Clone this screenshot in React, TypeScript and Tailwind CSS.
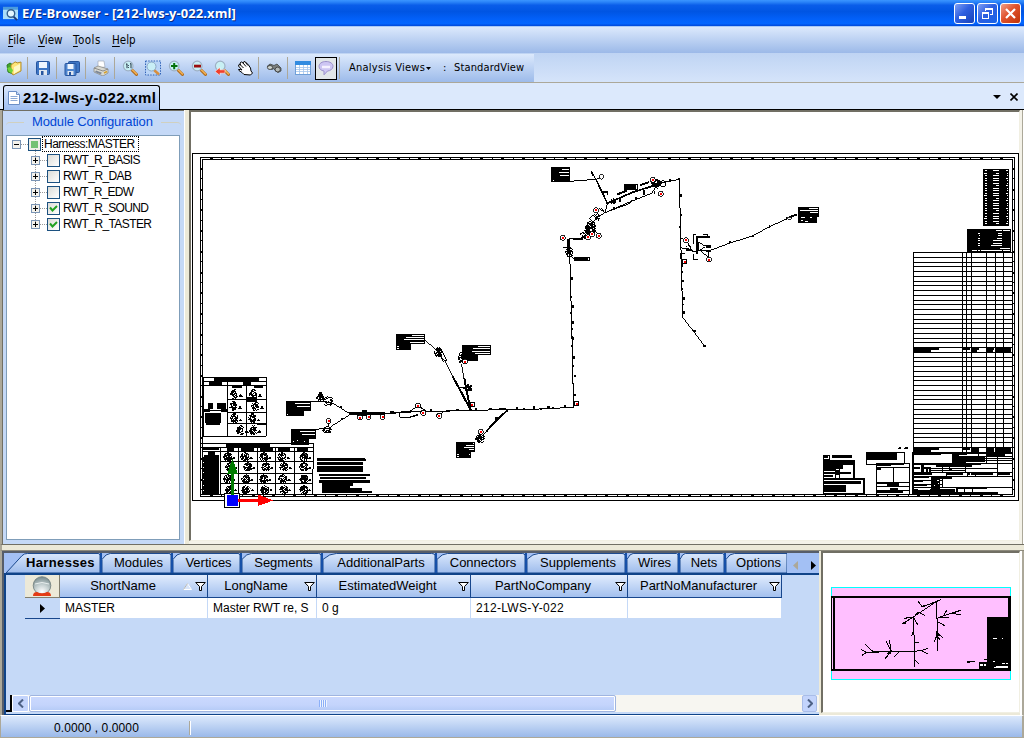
import React from "react";

const ui = "font-['DejaVu_Sans_Condensed','DejaVu_Sans',sans-serif]";

type Box = [number, number, number, number];

function Boxes({ items, fill = "#000" }: { items: Box[]; fill?: string }) {
  return (
    <g fill={fill}>
      {items.map(([x1, y1, x2, y2], i) => (
        <rect key={i} x={x1} y={y1} width={x2 - x1} height={y2 - y1} />
      ))}
    </g>
  );
}

function Lines({ d, w = 3, color = "#000" }: { d: string; w?: number; color?: string }) {
  return <path d={d} fill="none" stroke={color} strokeWidth={w} />;
}

/* dense symbol cluster drawn on a 3-unit raster */
function Cluster({ x, y, w, h, seed = 1, density = 0.6 }: { x: number; y: number; w: number; h: number; seed?: number; density?: number }) {
  let s = seed * 7919 + 13;
  let d = "";
  for (let r = 0; r < h; r += 3) {
    for (let c = 0; c < w; c += 3) {
      s = (s * 1103515245 + 12345) % 2147483648;
      const u = (c - w / 2) / (w / 2);
      const v = (r - h / 2) / (h / 2);
      if (u * u + v * v < 1.1 && s / 2147483648 < density) d += `M${x + c} ${y + r}h3v3h-3z`;
    }
  }
  return <path d={d} fill="#000" />;
}

function Marker({ x, y, square = false }: { x: number; y: number; square?: boolean }) {
  return (
    <g>
      {square ? (
        <rect x={x - 5.5} y={y - 6} width="12" height="12" fill="#fff" stroke="#000" strokeWidth="3" />
      ) : (
        <circle cx={x} cy={y} r="7.5" fill="#fff" stroke="#000" strokeWidth="2.6" />
      )}
      <rect x={x - 3} y={y - 3} width="6" height="6" fill="#f00" />
    </g>
  );
}

function Ticks() {
  const out: React.ReactElement[] = [];
  for (let i = 0; i < 78; i++) {
    const x = 544.3 + (i - 32) * 10.4;
    const w = i % 2 === 0 ? 3 : 1;
    if (x > 203 && x < 1011) {
      out.push(<rect key={"t" + i} x={Math.round(x - w / 2)} y="157" width={w} height="2" />);
      out.push(<rect key={"b" + i} x={Math.round(x - w / 2)} y="494" width={w} height="2" />);
    }
  }
  for (let i = 0; i < 33; i++) {
    const y = 168 + i * 10.35;
    const h = i % 2 === 0 ? 2 : 1;
    if (y < 492) {
      out.push(<rect key={"l" + i} x="200" y={Math.round(y)} width="3" height={h} />);
      out.push(<rect key={"r" + i} x="1012" y={Math.round(y)} width="2" height={h} />);
    }
  }
  return <g>{out}</g>;
}

const rowYs = Array.from({ length: 42 }, (_, i) => Math.round(252 + i * 4.75));
const slitYs = [60, 70, 75, 85, 90, 99, 105, 115, 120, 130, 135, 145, 150, 160, 165, 175, 180, 190, 199, 204, 213, 219];
const legendCells = [
  [98, 246], [150, 246], [206, 246], [262, 246], [326, 246],
  [104, 276], [158, 276], [212, 276], [268, 276], [326, 276],
  [98, 312], [152, 312], [206, 312], [264, 312], [326, 312],
  [104, 343], [154, 343], [210, 343], [266, 343], [326, 343],
];

function Drawing() {
  return (
    <svg className="block h-full w-full" viewBox="191 112 828 428" preserveAspectRatio="none" shapeRendering="crispEdges">
      <rect x="192.5" y="153.5" width="826" height="347" fill="none" stroke="#000" />
      <rect x="200.5" y="157.5" width="814" height="339" fill="none" stroke="#000" />
      <rect x="202.5" y="159.5" width="810" height="335" fill="none" stroke="#000" />
      <Ticks />
      {/* parts table */}
      {rowYs.map((y) => (
        <rect key={y} x="913" y={y} width="100" height="1" />
      ))}
      {[913, 962, 966, 971, 986, 995, 1003].map((x) => (
        <rect key={x} x={x} y="252" width="1" height="202" />
      ))}

      {/* title blocks, upper right */}
      <g transform="translate(810 150) scale(.33333)">
        <Boxes items={[[519, 57, 597, 228], [471, 237, 603, 306], [310, 592, 387, 600], [310, 598, 363, 609], [458, 592, 480, 600], [485, 592, 507, 600], [485, 598, 501, 609], [530, 592, 552, 600], [530, 598, 549, 609], [557, 592, 603, 609]]} />
        {slitYs.map((y, i) => (
          <Boxes key={y} fill="#fff" items={[[i % 9 === 1 ? 522 : 525, y, 531, y + 3], [i % 5 === 1 ? 558 : 549, y, 567, y + 3], [i % 3 === 0 ? 588 : 591, y, 594, y + 3]]} />
        ))}
        <Boxes fill="#fff" items={[[558, 240, 576, 243], [579, 240, 600, 243], [504, 249, 510, 252], [507, 255, 510, 258], [504, 264, 510, 267], [504, 270, 510, 273], [504, 279, 510, 282], [504, 285, 510, 288], [564, 249, 576, 252], [564, 255, 576, 258], [561, 264, 576, 267], [549, 270, 576, 273], [549, 279, 576, 282], [543, 285, 576, 288], [570, 294, 600, 297], [486, 300, 501, 303], [504, 300, 510, 303], [513, 300, 576, 303], [579, 300, 600, 303]]} />
      </g>

      {/* title blocks, lower right */}
      <g transform="translate(810 340) scale(.33333)">
        <Boxes items={[[310, 322, 387, 330], [310, 328, 363, 337], [458, 322, 480, 330], [485, 322, 507, 336], [530, 322, 552, 336], [557, 322, 603, 337], [306, 336, 312, 462], [310, 336, 607, 342], [310, 342, 393, 345], [426, 342, 447, 376], [447, 342, 471, 345], [447, 351, 525, 365], [447, 365, 468, 376], [530, 342, 585, 347], [310, 369, 513, 375], [310, 381, 330, 387], [333, 375, 342, 396], [342, 381, 363, 384], [348, 387, 354, 396], [357, 387, 363, 396], [378, 375, 486, 380], [417, 387, 426, 391], [310, 399, 366, 405], [408, 399, 459, 405], [471, 399, 480, 405], [483, 399, 495, 405], [498, 399, 549, 405], [561, 399, 600, 405], [310, 408, 607, 411], [363, 411, 426, 417], [363, 417, 390, 462], [310, 411, 357, 414], [310, 423, 339, 426], [310, 435, 351, 438], [310, 447, 324, 462], [324, 450, 360, 459], [360, 447, 435, 459], [438, 444, 531, 447], [438, 447, 444, 459], [310, 457, 564, 464]]} />
        <Lines d="M447 348.500H607M525 354.500H607M525 361.500H607M468 370.500H607M310 397.500H607M333 385.500H562M363 391.500H465M310 420.500H397M310 432.500H397M310 441.500H607M505 343V363M529 343V370M562 343V408M397 375V397M418 378V391M466 380V397M397 411V441M463 447V459M487 447V459M409 397V408M472 397V408M498 397V408" />
        <Boxes fill="#fff" items={[[381, 420, 387, 423], [384, 429, 387, 432], [372, 435, 375, 438]]} />
        <Boxes items={[[264, 324, 267, 327], [267, 321, 273, 327], [282, 324, 285, 327], [285, 321, 294, 327], [39, 345, 58, 348], [39, 345, 54, 354], [39, 357, 60, 360], [66, 345, 126, 354], [39, 360, 135, 375], [39, 375, 99, 387], [39, 387, 78, 393], [39, 396, 123, 402], [39, 405, 69, 411], [129, 360, 135, 414], [76, 390, 90, 405], [39, 414, 165, 420], [42, 423, 153, 432], [42, 435, 108, 456], [159, 414, 165, 463], [39, 458, 165, 463], [168, 337, 261, 360], [199, 375, 243, 378], [199, 381, 213, 390], [199, 426, 231, 432], [231, 430, 267, 441], [240, 444, 264, 450], [199, 450, 279, 459]]} />
        <Lines d="M40.500 345V463M58.500 345V360M78 387V414M88 387V414M169.500 337.500H283.500V373.500H169.500ZM199.500 370.500H298.500V463H199.500ZM199 382.500H298M250.500 382V427M199 427.500H298M199 439.500H298M199 451.500H298" />
      </g>

      {/* legends, lower left */}
      <g transform="translate(190 370) scale(.33333)">
        <Boxes items={[[72, 22, 207, 34], [57, 37, 96, 44], [160, 37, 183, 44], [127, 47, 155, 54], [193, 47, 220, 54], [54, 100, 69, 116], [82, 100, 107, 116], [42, 116, 60, 126], [60, 119, 112, 123], [45, 128, 92, 158], [93, 116, 112, 126], [169, 82, 200, 96], [112, 86, 135, 90], [202, 160, 230, 166], [48, 158, 90, 164]]} />
        <Lines d="M40.500 22.500H229.500V199.500H40.500ZM40 35.500H230M40 46.500H230M112.500 35V199M169.500 46V199M112 88.500H230M112 127.500H230M112 160.500H230" />
        {[[120, 56], [178, 56], [118, 92], [184, 92], [120, 130], [174, 130], [138, 164], [176, 164]].map(([x, y], i) => (
          <g key={i}>
            <Cluster x={x} y={y} w={24} h={30} seed={i + 3} density={0.62} />
            <path d={`M${x + 26} ${y + 24}l6-9l6 9z`} />
            <circle cx={x + 12} cy={y + 16} r="7" fill="none" stroke="#000" strokeWidth="3" />
          </g>
        ))}
        <Boxes items={[[108, 220, 240, 233], [40, 234, 87, 240], [110, 235, 132, 243], [153, 235, 192, 243], [210, 235, 250, 243], [264, 235, 300, 243], [320, 235, 354, 243], [54, 246, 75, 258], [42, 256, 87, 262], [36, 262, 87, 373]]} />
        <Lines d="M34 220.500H370.500V297M368 297V373M40 233.500H370M40 243.500H370M91 274.500H369M91 310.500H369M91 340.500H369M91.500 233V373M145.500 233V373M202.500 233V373M256.500 233V373M313.500 233V373M34 373.500H370" />
        {legendCells.map(([x, y], i) => (
          <g key={i}>
            <Cluster x={x} y={y + 1} w={27} h={27} seed={i + 21} density={0.75} />
            <path d={`M${x + 27} ${y + 21}l6-8l6 8z`} />
            <path d={`M${x} ${y + 18}l8-6M${x + 18} ${y + 4}l9 9`} stroke="#000" strokeWidth="2" />
          </g>
        ))}
        <Boxes fill="#fff" items={[[39, 276, 42, 279], [39, 291, 42, 294], [39, 306, 42, 309], [39, 327, 42, 330], [39, 345, 42, 348], [39, 360, 42, 363]]} />
        <Boxes items={[[381, 264, 525, 272], [381, 267, 528, 273], [381, 276, 519, 285], [381, 288, 519, 306], [387, 312, 540, 318], [390, 321, 528, 327], [387, 330, 540, 339], [396, 336, 489, 348], [396, 348, 480, 354], [396, 354, 516, 363], [396, 360, 507, 369], [396, 363, 546, 369]]} />

        {/* left branch of the harness */}
        <Boxes items={[[288, 93, 363, 123], [288, 120, 342, 138], [303, 177, 378, 207], [303, 204, 357, 224]]} />
        <Boxes fill="#fff" items={[[315, 100, 360, 102], [321, 108, 360, 110], [303, 116, 360, 118], [330, 183, 375, 185], [336, 192, 375, 194], [318, 200, 375, 202], [291, 132, 294, 135], [309, 213, 312, 216], [321, 210, 324, 213], [342, 213, 345, 216]]} />
        <Lines w={3} d="M363 94H382L410 96L425 98L478 130M378 178L398 176L418 174L430 165L478 135M416 153V172M478 132H605L632 126H780M630 128V142H660L684 132M663 122L684 107L708 123M747 136L760 126" />
        <Boxes items={[[478, 127, 585, 134], [516, 120, 531, 129], [500, 134, 540, 138], [606, 123, 612, 128], [720, 118, 724, 124], [450, 109, 455, 115], [452, 144, 458, 150], [388, 67, 395, 84]]} />
        <Cluster x={378} y={70} w={24} h={27} seed={4} density={0.8} />
        <Cluster x={398} y={78} w={30} h={30} seed={8} density={0.5} />
        <Cluster x={396} y={168} w={30} h={20} seed={7} density={0.65} />
        <Marker x={416} y={153} /><Marker x={510} y={143} /><Marker x={536} y={141} /><Marker x={578} y={141} />
        <Marker x={684} y={107} /><Marker x={700} y={128} /><Marker x={747} y={137} />
      </g>

      {/* centre branches */}
      <g transform="translate(390 320) scale(.33333)">
        <Lines d="M0 279L28 277L240 271L350 269L450 267L552 262L548 162L545 0" />
        <Boxes items={[[546, 3, 552, 12], [546, 24, 549, 30], [543, 75, 546, 81], [549, 108, 555, 117], [549, 135, 552, 140], [552, 165, 558, 171], [546, 186, 550, 192], [552, 222, 558, 228], [522, 255, 528, 263], [486, 262, 492, 265], [471, 259, 480, 265], [429, 258, 435, 267], [378, 262, 384, 268], [399, 265, 405, 269], [327, 263, 347, 270], [297, 264, 306, 270], [255, 265, 261, 273], [198, 267, 207, 273], [120, 268, 126, 275], [450, 265, 456, 270], [0, 273, 12, 279], [18, 42, 105, 72], [18, 69, 63, 90], [216, 75, 303, 105], [216, 102, 264, 123], [198, 366, 255, 396], [198, 393, 243, 414]]} />
        <Boxes fill="#fff" items={[[66, 45, 102, 48], [48, 51, 102, 54], [42, 57, 102, 60], [60, 65, 102, 68], [21, 78, 27, 81], [21, 84, 27, 86], [264, 78, 300, 81], [249, 84, 300, 87], [246, 92, 300, 95], [255, 99, 300, 102], [228, 375, 252, 378], [222, 381, 252, 384], [237, 387, 252, 390], [201, 402, 207, 405], [201, 408, 207, 411], [237, 402, 240, 405], [249, 369, 252, 372]]} />
        <Lines w={2.7} d="M105 60L138 90L168 128L190 172L242 270M214 132L224 184L242 268" />
        <Lines w={6} d="M188 170L206 202L242 270M223 174L228 205L242 268M353 270L318 303L288 335" />
        <Lines d="M206 202H243M140 84L160 124L170 120L154 88ZM288 335L260 366" />
        <Cluster x={132} y={82} w={24} h={30} seed={13} density={0.8} />
        <Cluster x={203} y={96} w={15} h={33} seed={9} density={0.75} />
        <Cluster x={219} y={192} w={27} h={20} seed={5} density={0.8} />
        <Cluster x={256} y={342} w={30} h={25} seed={11} density={0.75} />
        <Boxes items={[[234, 204, 245, 212], [316, 291, 324, 303]]} />
        <Marker x={225} y={125} /><Marker x={247} y={254} square /><Marker x={560} y={251} square /><Marker x={273} y={336} />
        <Lines d="M30 279V292H54L84 286M60 274L84 257L106 272" />
        <Marker x={84} y={257} /><Marker x={100} y={279} /><Marker x={148} y={288} />
      </g>

      {/* upper branches */}
      <g transform="translate(530 150) scale(.33333)">
        <Lines d="M128 628L121 380L118 265H150L166 255L180 228L198 205L225 188L290 160L365 130L385 100M385 100L448 88L452 260L458 502L524 588M225 188L232 160L198 88L186 66M120 94L160 91L198 88L214 80M232 160L300 130L385 100M454 293L490 304L545 300L600 279L668 258L718 230L770 207L800 192" />
        <Lines w={5} d="M198 88L232 160L310 126L396 100M183 64L190 76" />
        <Lines w={6} d="M262 133L290 122M331 105L358 96M114 268V312M130 267H160M768 206L802 193" />
        <Lines d="M208 175L224 188M212 173L222 184M178 205L190 218M178 205L195 192M368 100L386 118M345 120L340 134M448 88V96M225 188L300 160L304 150M98 293H114V304M107 304H130M120 265V318L134 327M166 255L175 262M182 228L207 257M372 122L374 132" />
        <Boxes items={[[63, 51, 120, 96], [282, 102, 324, 120], [132, 321, 180, 332], [804, 171, 867, 201], [804, 198, 861, 219], [444, 84, 450, 91], [449, 132, 456, 141], [447, 153, 450, 157], [450, 192, 456, 197], [448, 229, 453, 235], [455, 330, 460, 350], [455, 362, 459, 368], [456, 390, 462, 397], [455, 414, 459, 420], [460, 441, 465, 451], [457, 462, 461, 466], [460, 483, 466, 492], [120, 380, 129, 389], [122, 438, 126, 444], [124, 465, 132, 473], [120, 486, 125, 492], [126, 513, 132, 522], [124, 534, 129, 540], [126, 562, 132, 570], [123, 585, 127, 591], [129, 618, 135, 627], [520, 584, 528, 591], [490, 539, 497, 546], [716, 225, 721, 234], [597, 273, 603, 280], [666, 255, 672, 260], [417, 86, 423, 96], [216, 124, 234, 130], [230, 124, 234, 136], [314, 141, 320, 146], [250, 170, 254, 177], [268, 144, 272, 156], [340, 120, 344, 134]]} />
        <Boxes fill="#fff" items={[[96, 57, 117, 60], [87, 66, 117, 68], [90, 75, 117, 77], [96, 83, 117, 85], [69, 90, 72, 92], [318, 105, 321, 117], [174, 324, 177, 330], [837, 174, 864, 177], [810, 180, 864, 183], [840, 186, 864, 188], [813, 201, 825, 203], [840, 201, 846, 204], [813, 210, 819, 213], [825, 213, 834, 215], [843, 212, 855, 214], [120, 266, 128, 270]]} />
        <Cluster x={164} y={214} w={33} h={36} seed={7} density={0.75} />
        <Cluster x={150} y={240} w={32} h={26} seed={3} density={0.7} />
        <Cluster x={106} y={290} w={24} h={30} seed={6} density={0.65} />
        <Cluster x={362} y={88} w={30} h={22} seed={8} density={0.85} />
        <Cluster x={240} y={144} w={18} h={18} seed={5} density={0.75} />
        <Cluster x={192} y={190} w={18} h={24} seed={15} density={0.5} />
        <Lines d="M490 282V254H497M520 254H533V262M490 313V328H503M500 262V312M499 262H540M506 276L524 288H542M506 304L524 291M506 276V304M512 304L536 322M536 304V322M470 270L480 292L490 304M460 265H454M465 310H453V326" />
        <Lines w={6} d="M500 262V312M497 262H540M528 290H542M528 303H542" />
        <Cluster x={466} y={284} w={18} h={18} seed={12} density={0.6} />
        <circle cx="398" cy="101" r="9" fill="none" stroke="#000" strokeWidth="3" />
        <ellipse cx="214" cy="80" rx="6" ry="7.500" fill="#fff" stroke="#000" strokeWidth="2.500" />
        <ellipse cx="778" cy="205" rx="7" ry="4" fill="#fff" stroke="#000" strokeWidth="2.500" />
        <Marker x={99} y={264} /><Marker x={174} y={262} /><Marker x={186} y={253} /><Marker x={207} y={258} />
        <Marker x={198} y={181} /><Marker x={369} y={90} /><Marker x={393} y={132} /><Marker x={468} y={271} />
        <Marker x={464} y={335} square /><Marker x={537} y={329} />
      </g>

      {/* origin gizmo */}
      <g>
        <rect x="224.500" y="493.500" width="15" height="14" fill="#fff" stroke="#000" />
        <rect x="227" y="495" width="11" height="11" fill="#00f" />
        <rect x="231" y="472" width="3" height="23" fill="#007b00" />
        <path d="M232.500 459l5.500 15h-11z" fill="#007b00" />
        <rect x="238" y="499" width="21" height="3" fill="#f00" />
        <path d="M258 494.500l15 6-15 5.500z" fill="#f00" />
      </g>
    </svg>
  );
}

function Preview() {
  return (
    <svg className="block h-full w-full" viewBox="129 54 588 477" preserveAspectRatio="none" shapeRendering="crispEdges">
      <rect x="154.500" y="157.500" width="537" height="276" fill="#ffbfff" stroke="#0ff" strokeWidth="3" />
      <rect x="154.500" y="184.500" width="537" height="222" fill="none" stroke="#000" strokeWidth="3" />
      <Boxes items={[[153, 183, 693, 189], [159, 183, 165, 408], [153, 402, 693, 408], [684, 183, 693, 408], [621, 246, 693, 408], [597, 381, 622, 403], [561, 378, 584, 381], [561, 381, 570, 384], [612, 372, 622, 375]]} />
      <Boxes fill="#fff" items={[[639, 309, 651, 312], [666, 309, 669, 312], [639, 378, 645, 381], [600, 387, 609, 393], [612, 387, 618, 393], [666, 384, 675, 387], [678, 384, 684, 387], [648, 393, 684, 396], [642, 396, 684, 399]]} />
      <Lines d="M243 343L260 352L246 361M255 327L279 350M260 352H296M279 349H400L425 347L443 340M425 347L443 356M318 319L334 349L328 316M334 349L322 355M334 349L315 371M356 351L343 365M403 395V324L400 246L470 199L473 348M403 324L418 321M403 372L416 386M366 267L400 246L373 250M400 246L413 269M413 230L434 241M414 198L427 216L470 199L482 194M473 248H508M480 246L542 226M490 244L500 226M515 236L542 238M473 260L494 272M473 295L463 320M473 295L488 308M473 305L480 314M400 290L394 304" />
      <Lines w={5} d="M404 242L416 231M424 216L440 210M470 303V292L478 302M322 355H334M372 266L378 262M476 247H494" />
    </svg>
  );
}

function Ico({ children, className = "h-4 w-4" }: { children: React.ReactNode; className?: string }) {
  return (
    <svg viewBox="0 0 16 16" className={className} fill="none">
      {children}
    </svg>
  );
}

function Slot({ children }: { children: React.ReactNode }) {
  return <div className="flex w-[23px] shrink-0 items-center justify-center">{children}</div>;
}

function Sep() {
  return (
    <div className="flex w-[6px] shrink-0 items-center pl-[2px]">
      <div className="h-[22px] w-px bg-[#aca899]" />
    </div>
  );
}

function Magnifier({ children }: { children?: React.ReactNode }) {
  return (
    <Ico>
      <path d="M10 10l4.500 4.500" stroke="#b06a1c" strokeWidth="3" strokeLinecap="round" />
      <path d="M10.500 10l4 4" stroke="#f5b353" strokeWidth="1.500" strokeLinecap="round" />
      <circle cx="6.200" cy="6" r="4.800" fill="#c8f0f4" stroke="#9eb0c4" strokeWidth="1.200" />
      {children}
    </Ico>
  );
}

function Toolbar() {
  return (
    <div className={`flex h-[30px] border-b border-[#aca899] bg-gradient-to-b from-[#bfd4f3] to-[#d5e4fa] ${ui}`}>
      <div className="mt-px flex h-[28px] w-[534px] bg-gradient-to-b from-[#dce9fc] to-[#9dbbea] pl-[2px]">
        <Slot>
          <Ico>
            <path d="M1 5l3-2 3 2v9l-5-2z" fill="#43a32c" stroke="#2c7d22" />
            <path d="M5 5l4-3h1l1 1 4-1v9l-8 4-2-3z" fill="#ffe477" stroke="#b48d2c" />
            <path d="M8 7l6-3v6l-6 4z" fill="#fff8c4" />
            <path d="M1 8l3-1 3 3-1 3-3-1z" fill="#6fd43a" />
          </Ico>
        </Slot>
        <Sep />
        <Slot>
          <Ico>
            <rect x="1.500" y="1.500" width="13" height="13" rx="1" fill="#3d75c4" stroke="#27559e" />
            <rect x="4" y="2" width="8" height="6" fill="#eef5ff" />
            <rect x="4" y="10" width="8" height="5" fill="#dfe6f0" />
            <rect x="6" y="11" width="2.500" height="4" fill="#27559e" />
          </Ico>
        </Slot>
        <Sep />
        <Slot>
          <Ico>
            <rect x="4.500" y="1.500" width="11" height="11" rx="1" fill="#3d75c4" stroke="#27559e" />
            <rect x="1" y="3.500" width="11" height="12" rx="1" fill="#4f86d0" stroke="#27559e" />
            <rect x="3.500" y="4" width="6" height="5" fill="#eef5ff" />
            <rect x="3.500" y="11" width="6" height="4" fill="#dfe6f0" />
            <rect x="5" y="12" width="2" height="3" fill="#27559e" />
          </Ico>
        </Slot>
        <Sep />
        <Slot>
          <Ico>
            <path d="M5 1h6l1 6-7 1z" fill="#fff" stroke="#a0a9b8" strokeWidth=".7" />
            <path d="M1 8l4-2 10 3v4l-5 3-9-4z" fill="#d9d9d2" stroke="#8d8d88" strokeWidth=".8" />
            <path d="M1 8l9 3 5-2" stroke="#777" strokeWidth=".8" />
            <path d="M3 10.500l6 2.300-1.500 1.500L2 12z" fill="#7c8797" />
            <path d="M11 13l3-1.500" stroke="#d5a02a" strokeWidth="1.500" />
          </Ico>
        </Slot>
        <Sep />
        <Slot>
          <Magnifier>
            <path d="M4 4.500l1-.8v4.500M8 4l1-.5v4.700M6.500 5v.8M6.500 7v.8" stroke="#234" strokeWidth="1" />
          </Magnifier>
        </Slot>
        <Slot>
          <Ico>
            <rect x=".5" y="1" width="15" height="14" stroke="#2f62b7" strokeDasharray="1.5 1.2" fill="#b9d4f7" />
            <path d="M9 10l5 4.500" stroke="#d78e3e" strokeWidth="2.500" />
            <circle cx="6.500" cy="6.500" r="4.500" fill="#c8eef6" stroke="#8ca8c6" />
          </Ico>
        </Slot>
        <Slot>
          <Magnifier>
            <path d="M3 6h6.500M6.200 3v6.300" stroke="#06720a" strokeWidth="2" />
          </Magnifier>
        </Slot>
        <Slot>
          <Magnifier>
            <rect x="3" y="4.700" width="7" height="2.800" fill="#9b0f0f" />
          </Magnifier>
        </Slot>
        <Slot>
          <Magnifier>
            <path d="M1 11.500l5-4v2.300h5v3.400H6v2.300z" fill="#f0402c" stroke="#fff" strokeWidth=".5" />
          </Magnifier>
        </Slot>
        <Slot>
          <Ico>
            <path d="M7 14.500L5 12.500 2 10.500 1.500 9.500h2L5 10 1.500 6l.5-1.500 1.500.5L3 3l1.500-1L6 3l1-1.500L8.500 2l3 3 2 3 .5 3 1.500 2-2 2z" fill="#fff" stroke="#000" />
            <path d="M3.500 5l3 3M6 3l3 3.500M8.500 2.500l2.500 3" stroke="#000" />
          </Ico>
        </Slot>
        <Sep />
        <Slot>
          <Ico>
            <path d="M1 6.500L4 4l4 1.500 3-1.500 4 4v3l-3 1.500-3-2-1-2-2 1z" fill="#7c807f" stroke="#3d4444" strokeWidth=".8" />
            <ellipse cx="4" cy="7.500" rx="2.600" ry="2" fill="#cdd4d0" stroke="#333" strokeWidth=".8" />
            <ellipse cx="11.700" cy="9.500" rx="2.600" ry="2.400" fill="#b4bab8" stroke="#333" strokeWidth=".8" />
          </Ico>
        </Slot>
        <Sep />
        <Slot>
          <Ico>
            <rect x=".5" y="1.500" width="15" height="13" fill="#fff" stroke="#6f9fd8" />
            <rect x="0" y="1" width="16" height="4" fill="#318be0" />
            <path d="M1 7.500h14M1 9.500h14M1 11.500h14M4.500 5v9M8.500 5v9M12.500 5v9" stroke="#a2c4ec" strokeWidth=".8" />
          </Ico>
        </Slot>
        <div className="ml-px flex h-[23px] w-[22px] shrink-0 items-center justify-center self-center border border-black bg-[#e1e6e8]">
          <Ico>
            <path d="M8 1.500c4 0 7 2 7 4.800S12 11 9.500 11L6 14.800V11C3 10.500 1 9 1 6.300 1 3.500 4 1.500 8 1.500z" fill="#cdc6f3" stroke="#9c92cb" />
            <path d="M4 7h8" stroke="#f5f2ff" strokeWidth="2.500" />
          </Ico>
        </div>
        <Sep />
        <div className="flex items-center pt-px pl-[6px] text-[11px] text-black">
          <span className="w-[77px] whitespace-nowrap tracking-[0.25px]">Analysis Views</span>
          <svg className="h-[3px] w-[5px]" viewBox="0 0 5 3"><path d="M0 0h5L2.500 3z" /></svg>
          <span className="w-[23px] pl-[12px]">:</span>
          <span className="whitespace-nowrap tracking-[0.15px]">StandardView</span>
        </div>
      </div>
    </div>
  );
}

function TitleBar() {
  return (
    <div className="flex h-[26px] items-center bg-[linear-gradient(to_bottom,#3b95ff_0%,#2a83f8_8%,#0a5de9_20%,#0055e3_45%,#0260f8_72%,#0366ff_90%,#0048d8_100%)] pr-[3px] pl-[3px]">
      <Ico className="h-[15px] w-[15px]">
        <rect x="0" y="1" width="16" height="13" fill="#a9dcf9" />
        <rect x="0" y="1" width="16" height="3" fill="#4a9bdd" />
        <path d="M11 11l4 4" stroke="#203a78" strokeWidth="2" />
        <circle cx="8.500" cy="8" r="4" fill="#e3f6ff" stroke="#33608f" strokeWidth="1.500" />
      </Ico>
      <span className="ml-[4px] grow font-['Open_Sans','Noto_Sans',sans-serif] text-[13px] leading-none font-bold whitespace-nowrap text-white [text-shadow:1px_1px_0_#0a2a80]">
        <span className="tracking-[0.07px]">E/E-Browser - [212-lws-y-022.xml]</span>
      </span>
      <div className="flex gap-[2px]">
        <div className="flex h-[21px] w-[21px] rounded-[3px] border border-white bg-[linear-gradient(135deg,#7f9ff5,#2e5fe0_45%,#1741b8)]">
          <svg viewBox="0 0 19 19"><rect x="4" y="12" width="7" height="3" fill="#fff" /></svg>
        </div>
        <div className="flex h-[21px] w-[21px] rounded-[3px] border border-white bg-[linear-gradient(135deg,#7f9ff5,#2e5fe0_45%,#1764e8)]">
          <svg viewBox="0 0 19 19" fill="none" stroke="#fff" shapeRendering="crispEdges">
            <path d="M7.500 7V4.500h7v6H12M7 5.500h8M4.500 8.500h6v6h-6zM4 9.500h7" />
          </svg>
        </div>
        <div className="flex h-[21px] w-[21px] rounded-[3px] border border-white bg-[linear-gradient(135deg,#f0a08a,#e0522c_45%,#c03408)]">
          <svg viewBox="0 0 19 19"><path d="M5 5l9 9M14 5l-9 9" stroke="#fff" strokeWidth="2.200" /></svg>
        </div>
      </div>
    </div>
  );
}

function Menu() {
  const item = "underline decoration-1 underline-offset-[2px]";
  return (
    <div className={`flex h-[27px] items-center border-t border-[#a9c9f5] bg-gradient-to-b from-[#dce9fc] to-[#9cb9e8] pt-px pl-[8px] text-[11.5px] text-black ${ui}`}>
      <span className="w-[30px]"><span className={item}>F</span>ile</span>
      <span className="w-[35px]"><span className={item}>V</span>iew</span>
      <span className="w-[39px] tracking-[0.5px]"><span className={item}>T</span>ools</span>
      <span><span className={item}>H</span>elp</span>
    </div>
  );
}

function DocTabs() {
  return (
    <div className="flex h-[27px] items-end border-b border-black bg-[#dce9fc] pl-[3px]">
      <div className="-mb-px flex h-[25px] w-[157px] items-center rounded-t-[3px] border border-b-0 border-black bg-gradient-to-b from-[#dce9fc] to-[#9dbdf0] pl-[4px]">
        <svg viewBox="0 0 12 14" className="h-[14px] w-[12px]">
          <path d="M.5.500h8l3 3v10H.500z" fill="#fff" stroke="#6c8fc6" />
          <path d="M2.500 5.500h7M2.500 7.500h7M2.500 9.500h7" stroke="#8ca9d5" />
          <path d="M8.500.500v3h3" fill="#c6dbf8" stroke="#6c8fc6" />
        </svg>
        <span className="ml-[3px] pt-px text-[15px] font-bold tracking-[0.33px] whitespace-nowrap">212-lws-y-022.xml</span>
      </div>
      <div className="flex h-full grow items-center justify-end gap-[9px] pt-px pr-[6px]">
        <svg className="h-[4px] w-[8px]" viewBox="0 0 8 4"><path d="M0 0h8L4 4z" /></svg>
        <svg className="h-[8px] w-[8px]" viewBox="0 0 8 8"><path d="M.5.500l7 7M7.500.500l-7 7" stroke="#000" strokeWidth="1.600" /></svg>
      </div>
    </div>
  );
}

function Expander({ open }: { open?: boolean }) {
  return (
    <svg className="h-[9px] w-[9px] shrink-0" viewBox="0 0 9 9" shapeRendering="crispEdges">
      <rect x=".5" y=".5" width="8" height="8" rx="1" fill="#f4f2ec" stroke="#7b95b5" />
      <path d={open ? "M2 4.500h5" : "M2 4.500h5M4.500 2v5"} stroke="#000" />
    </svg>
  );
}

const modules: [string, boolean, string][] = [
  ["RWT_R_BASIS", false, "tracking-[-0.7px]"],
  ["RWT_R_DAB", false, "tracking-[-0.6px]"],
  ["RWT_R_EDW", false, "tracking-[-0.75px]"],
  ["RWT_R_SOUND", true, "tracking-[-0.65px]"],
  ["RWT_R_TASTER", true, "tracking-[-0.6px]"],
];

function ModulePanel() {
  return (
    <div className="flex w-[182px] shrink-0 flex-col border-t border-l border-[#716f64] bg-[#c5d9f7] pr-[3px] pb-[4px] pl-[3px]">
      <div className="flex h-[24px] shrink-0 items-center gap-[8px] pb-[2px]">
        <div className="mt-[3px] h-[4px] w-[18px] rounded-tl-[4px] border-t border-[#d0d0bf]" />
        <span className="text-[13px] tracking-[-0.14px] whitespace-nowrap text-[#0046d5]">Module Configuration</span>
        <div className="mt-[3px] h-[4px] grow rounded-tr-[4px] border-t border-[#d0d0bf]" />
      </div>
      <div className="w-[174px] grow border border-[#7f9db9] bg-white text-[12px] text-black">
        <div className="flex h-[16px] items-center pl-[5px]">
          <Expander open />
          <div className="w-[7px] border-t border-dotted border-[#999]" />
          <div className="flex h-[13px] w-[13px] items-center justify-center border border-[#1c5180] bg-[#eeeee8]"><div className="h-[7px] w-[7px] bg-[#73c173]" /></div>
          <span className="ml-px flex h-[16px] w-[97px] items-center border border-dotted border-black pl-px tracking-[-0.52px] whitespace-nowrap">Harness:MASTER</span>
        </div>
        {modules.map(([name, on, spacing]) => (
          <div key={name} className="flex h-[16px] items-center">
            <div className="relative ml-[24px] flex h-full items-center before:absolute before:top-[-3px] before:left-[4px] before:h-[9px] before:border-l before:border-dotted before:border-[#999]"><Expander /></div>
            <div className="w-[7px] border-t border-dotted border-[#999]" />
            <div className="flex h-[13px] w-[13px] items-center justify-center border border-[#1c5180] bg-gradient-to-br from-[#dcdcd7] to-white">
              {on && <svg viewBox="0 0 9 9" className="h-[9px] w-[9px]"><path d="M1 3.500l2.500 3L8 2" fill="none" stroke="#21a121" strokeWidth="2" /></svg>}
            </div>
            <span className={`ml-[3px] whitespace-nowrap ${spacing}`}>{name}</span>
          </div>
        ))}
      </div>
    </div>
  );
}

function TabItem({ label, w, active, last }: { label: string; w: string; active?: boolean; last?: boolean }) {
  return (
    <div className={`relative flex h-full shrink-0 justify-center ${w} ${last ? "" : "border-r-2 border-[#1650a8]"} bg-[#a3c0f4]`}>
      <svg className="absolute inset-0 h-full w-full" viewBox="0 0 100 22" preserveAspectRatio="none">
        <defs>
          <linearGradient id="tabfill" x1="0" y1="0" x2="0" y2="1">
            <stop offset="0" stopColor="#d9e7fc" />
            <stop offset="1" stopColor="#9ebcec" />
          </linearGradient>
        </defs>
        <path vectorEffect="non-scaling-stroke" d={active ? "M0 22L17 3Q19 .5 23 .5H98Q100 .5 100 3V22Z" : last ? "M0 7Q6 .5 14 .5H100V22H0Z" : "M0 7Q6 .5 12 .5H97Q100 .5 100 3V22H0Z"} fill="url(#tabfill)" stroke="#17468c" strokeWidth="1" />
      </svg>
      <span className={`relative text-[13px] leading-[20px] whitespace-nowrap ${active ? "pl-[15px] font-bold tracking-[0.35px]" : "pl-[4px]"}`}>{label}</span>
    </div>
  );
}

function Filter() {
  return (
    <svg className="mr-px h-[9px] w-[11px] shrink-0" viewBox="0 0 11 9">
      <path d="M.7.500h9.600L6.500 4.500v4h-2v-4z" fill="#fff" stroke="#000" />
    </svg>
  );
}

function HeaderCell({ label, w, sort }: { label: string; w: string; sort?: boolean }) {
  return (
    <div className={`flex h-full shrink-0 items-center border-r border-b border-[#17468c] bg-gradient-to-b from-[#e1ecfd] to-[#a3c0ee] ${w}`}>
      <span className={`grow text-center text-[13px] whitespace-nowrap ${sort ? "pl-[3px]" : ""}`}>{label}</span>
      {sort && <svg className="mr-[3px] h-[7px] w-[9px]" viewBox="0 0 9 7"><path d="M4.500.500l4 6h-8z" fill="#d8e5fa" stroke="#fff" /><path d="M4.500.500l-4 6" stroke="#9a9a94" strokeWidth=".7" /></svg>}
      <Filter />
    </div>
  );
}

function GridPanel() {
  const cell = "h-full shrink-0 bg-white border-r border-[#c5d9f7] pl-[5px] text-[12px] leading-[20px] whitespace-nowrap";
  return (
    <div className="flex w-[817px] shrink-0 flex-col border-t-2 border-l-2 border-[#565d69] bg-[#c5d9f7]">
      <div className="flex h-[20px] shrink-0 bg-[#a3c0f4] pl-[2px]">
        <TabItem label="Harnesses" w="w-[96px]" active />
        <TabItem label="Modules" w="w-[71px]" />
        <TabItem label="Vertices" w="w-[69px]" />
        <TabItem label="Segments" w="w-[81px]" />
        <TabItem label="AdditionalParts" w="w-[114px]" />
        <TabItem label="Connectors" w="w-[90px]" />
        <TabItem label="Supplements" w="w-[100px]" />
        <TabItem label="Wires" w="w-[53px]" />
        <TabItem label="Nets" w="w-[46px]" />
        <TabItem label="Options" w="w-[61px]" last />
        <svg className="mt-[8px] ml-[6px] h-[9px] w-[23px]" viewBox="0 0 23 9">
          <path d="M5 0v9L0 4.500z" fill="#aca899" />
          <path d="M18 0v9l5-4.500z" />
        </svg>
      </div>
      <div className="h-[2px] shrink-0 bg-[#0f4388]" />
      <div className="flex grow flex-col border-l-[2px] border-[#0f4388]">
        <div className="flex h-[23px] shrink-0 pl-[19px]">
          <div className="flex h-full w-[35px] shrink-0 items-center justify-center border-r border-b border-[#817e6e] bg-[#ece9d8]">
            <svg viewBox="0 0 20 20" className="h-[20px] w-[20px]">
              <defs>
                <radialGradient id="orb" cx=".5" cy=".85" r=".8">
                  <stop offset="0" stopColor="#fff" /><stop offset=".5" stopColor="#c5d0d1" /><stop offset="1" stopColor="#7f9193" />
                </radialGradient>
              </defs>
              <circle cx="10" cy="9.500" r="8.800" fill="url(#orb)" stroke="#697879" strokeWidth=".8" />
              <path d="M3 8q7-3 14 0" stroke="#e8eeee" fill="none" />
              <path d="M1 20q0-4 4-4 5 2.500 10 0 4 0 4 4z" fill="#e33b14" />
            </svg>
          </div>
          <HeaderCell label="ShortName" w="w-[148px]" sort />
          <HeaderCell label="LongName" w="w-[109px]" />
          <HeaderCell label="EstimatedWeight" w="w-[154px]" />
          <HeaderCell label="PartNoCompany" w="w-[157px]" />
          <HeaderCell label="PartNoManufacturer" w="w-[154px]" />
        </div>
        <div className="flex h-[20px] shrink-0 pl-[19px]">
          <div className="flex h-[21px] w-[35px] shrink-0 items-center justify-center border-b border-[#17468c]">
            <svg className="h-[9px] w-[5px]" viewBox="0 0 5 9"><path d="M0 0l5 4.500L0 9z" /></svg>
          </div>
          <div className={`w-[148px] ${cell}`}>MASTER</div>
          <div className={`w-[109px] ${cell}`}>Master RWT re, S</div>
          <div className={`w-[154px] ${cell}`}>0 g</div>
          <div className={`w-[157px] ${cell}`}>
            <span className="tracking-[0.3px]">212-LWS-Y-022</span>
          </div>
          <div className={`w-[154px] ${cell}`} />
        </div>
        <div className="grow" />
        <div className="flex h-[17px] shrink-0 bg-[#f7f6f1]">
          <div className="h-full w-[6px] border-r-2 border-b-2 border-black bg-[#c5d9f7]" />
          <div className="flex h-full w-[17px] items-center justify-center rounded-[2px] border border-white bg-[#c3d4fc]">
            <svg className="h-[9px] w-[6px]" viewBox="0 0 6 9"><path d="M5 .5L1 4.500l4 4" fill="none" stroke="#4d6185" strokeWidth="2" /></svg>
          </div>
          <div className="flex h-full w-[587px] items-center justify-center rounded-[2px] border border-[#a0b5e0] bg-[linear-gradient(to_bottom,#cbd9fe,#c4d4fc_60%,#b4caf6)] ring-1 ring-white ring-inset">
            <div className="h-[7px] w-[8px] bg-[repeating-linear-gradient(to_right,#8cb0f8_0_1px,#eef4fe_1px_2px)]" />
          </div>
          <div className="grow" />
          <div className="mr-[2px] flex h-full w-[15px] items-center justify-center rounded-[2px] border border-[#a9bde8] bg-[#c3d4fc]">
            <svg className="h-[9px] w-[6px]" viewBox="0 0 6 9"><path d="M1 .5l4 4-4 4" fill="none" stroke="#4d6185" strokeWidth="2" /></svg>
          </div>
        </div>
        <div className="h-[3px] shrink-0 border-b border-[#0f4388] bg-[#c5d9f7]" />
      </div>
    </div>
  );
}

export default function App() {
  return (
    <div className="flex h-[738px] w-[1024px] flex-col overflow-hidden bg-[#ece9d8] font-['Liberation_Sans',Arial,sans-serif] text-black">
      <TitleBar />
      <Menu />
      <Toolbar />
      <DocTabs />
      <div className="flex h-[434px] shrink-0 border-l-2 border-[#aca899] bg-[#f4f2e8]">
        <ModulePanel />
        <div className="w-[5px] shrink-0 border-l border-white bg-[#ece9d8]" />
        <div className="h-[431px] w-[831px] border-t-2 border-r-[1px] border-b border-l-2 border-t-[#716f64] border-r-[#f1efe2] border-b-[#f1efe2] border-l-[#716f64] bg-white">
          <Drawing />
        </div>
        <div className="ml-[2px] grow border-l border-[#aca899] bg-white" />
      </div>
      <div className="h-[7px] shrink-0 border-t border-b border-l-2 border-t-[#716f64] border-b-[#8d8a7c] border-l-[#aca899] bg-[#ece9d8]" />
      <div className="flex h-[164px] shrink-0 border-l-2 border-[#aca899]">
        <GridPanel />
        <div className="w-[2px] shrink-0 bg-[#ece9d8]" />
        <div className="h-[162px] w-[199px] border-t-2 border-r border-b border-l-2 border-t-[#716f64] border-r-[#f1efe2] border-b-[#f1efe2] border-l-[#716f64] bg-white">
          <Preview />
        </div>
        <div className="grow border-r-2 border-[#aca899] bg-white" />
      </div>
      <div className="flex grow items-center border-t border-r-2 border-b border-l border-t-white border-r-[#aca899] border-b-[#aca899] border-l-[#aca899] bg-gradient-to-b from-[#dce9fc] to-[#9bb9e9] pt-[3px] pl-[53px] text-[12px]">
        <span className="w-[135px] tracking-[0.1px] whitespace-nowrap">0.0000 , 0.0000</span>
        <div className="h-[14px] w-[2px] border-r border-l border-r-white border-l-[#aca899]" />
      </div>
    </div>
  );
}
